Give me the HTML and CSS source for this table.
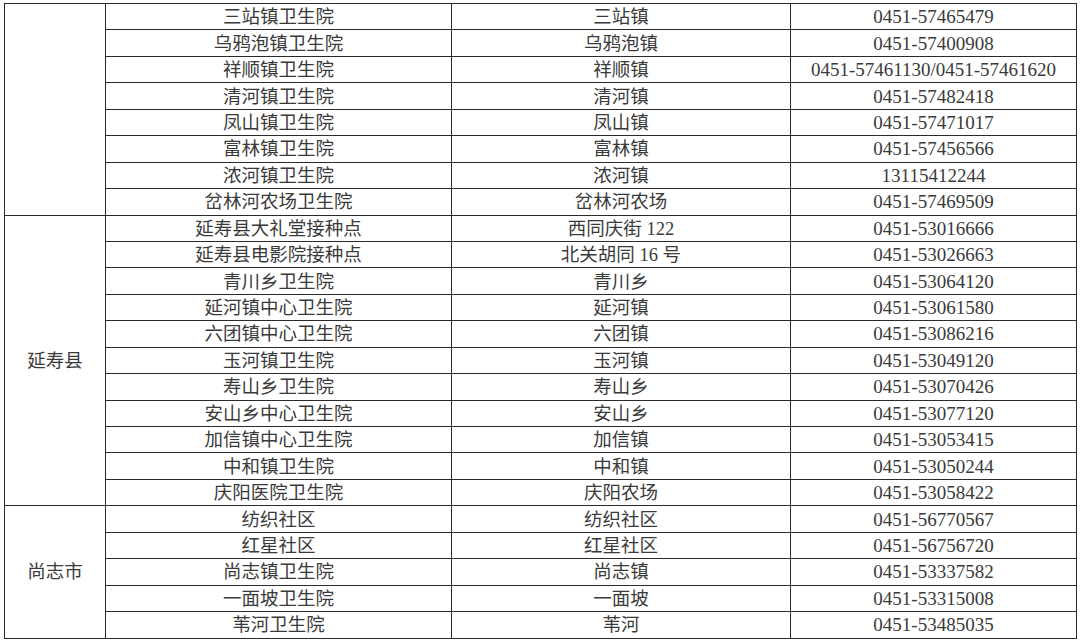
FILE: index.html
```html
<!DOCTYPE html>
<html lang="zh-CN">
<head>
<meta charset="utf-8">
<title>接种点</title>
<link rel="stylesheet" href="styles.css">
</head>
<body>
<table class="sheet">
<colgroup>
<col class="c-area"><col class="c-name"><col class="c-addr"><col class="c-tel">
</colgroup>
<tbody>
<tr><td class="area" rowspan="8"></td><td>三站镇卫生院</td><td>三站镇</td><td class="tel">0451-57465479</td></tr>
<tr><td>乌鸦泡镇卫生院</td><td>乌鸦泡镇</td><td class="tel">0451-57400908</td></tr>
<tr><td>祥顺镇卫生院</td><td>祥顺镇</td><td class="tel">0451-57461130/0451-57461620</td></tr>
<tr><td>清河镇卫生院</td><td>清河镇</td><td class="tel">0451-57482418</td></tr>
<tr><td>凤山镇卫生院</td><td>凤山镇</td><td class="tel">0451-57471017</td></tr>
<tr><td>富林镇卫生院</td><td>富林镇</td><td class="tel">0451-57456566</td></tr>
<tr><td>浓河镇卫生院</td><td>浓河镇</td><td class="tel">13115412244</td></tr>
<tr><td>岔林河农场卫生院</td><td>岔林河农场</td><td class="tel">0451-57469509</td></tr>
<tr><td class="area" rowspan="11">延寿县</td><td>延寿县大礼堂接种点</td><td>西同庆街 122</td><td class="tel">0451-53016666</td></tr>
<tr><td>延寿县电影院接种点</td><td>北关胡同 16 号</td><td class="tel">0451-53026663</td></tr>
<tr><td>青川乡卫生院</td><td>青川乡</td><td class="tel">0451-53064120</td></tr>
<tr><td>延河镇中心卫生院</td><td>延河镇</td><td class="tel">0451-53061580</td></tr>
<tr><td>六团镇中心卫生院</td><td>六团镇</td><td class="tel">0451-53086216</td></tr>
<tr><td>玉河镇卫生院</td><td>玉河镇</td><td class="tel">0451-53049120</td></tr>
<tr><td>寿山乡卫生院</td><td>寿山乡</td><td class="tel">0451-53070426</td></tr>
<tr><td>安山乡中心卫生院</td><td>安山乡</td><td class="tel">0451-53077120</td></tr>
<tr><td>加信镇中心卫生院</td><td>加信镇</td><td class="tel">0451-53053415</td></tr>
<tr><td>中和镇卫生院</td><td>中和镇</td><td class="tel">0451-53050244</td></tr>
<tr><td>庆阳医院卫生院</td><td>庆阳农场</td><td class="tel">0451-53058422</td></tr>
<tr><td class="area" rowspan="5">尚志市</td><td>纺织社区</td><td>纺织社区</td><td class="tel">0451-56770567</td></tr>
<tr><td>红星社区</td><td>红星社区</td><td class="tel">0451-56756720</td></tr>
<tr><td>尚志镇卫生院</td><td>尚志镇</td><td class="tel">0451-53337582</td></tr>
<tr><td>一面坡卫生院</td><td>一面坡</td><td class="tel">0451-53315008</td></tr>
<tr><td>苇河卫生院</td><td>苇河</td><td class="tel">0451-53485035</td></tr>
</tbody>
</table>
</body>
</html>
```
FILE: styles.css
```css
html, body {
  margin: 0;
  padding: 0;
  background: #ffffff;
}

body {
  padding: 3px 0 0 4px;
}

.sheet {
  border-collapse: collapse;
  table-layout: fixed;
  width: 1072px;
  font-family: "Liberation Serif", "Noto Sans CJK SC", serif;
  color: #3a3a3a;
}

.c-area { width: 101px; }
.c-name { width: 346px; }
.c-addr { width: 339px; }
.c-tel { width: 286px; }

.sheet td {
  border: 1px solid #2a2a2a;
  height: 25.45px;
  padding: 1px 0 0;
  box-sizing: border-box;
  text-align: center;
  vertical-align: middle;
  font-size: 18.5px;
  line-height: 24px;
  white-space: nowrap;
}

.sheet tr {
  height: 26.45px;
}

.sheet td.tel {
  font-size: 19px;
}

.sheet td.area {
  vertical-align: middle;
}
```
